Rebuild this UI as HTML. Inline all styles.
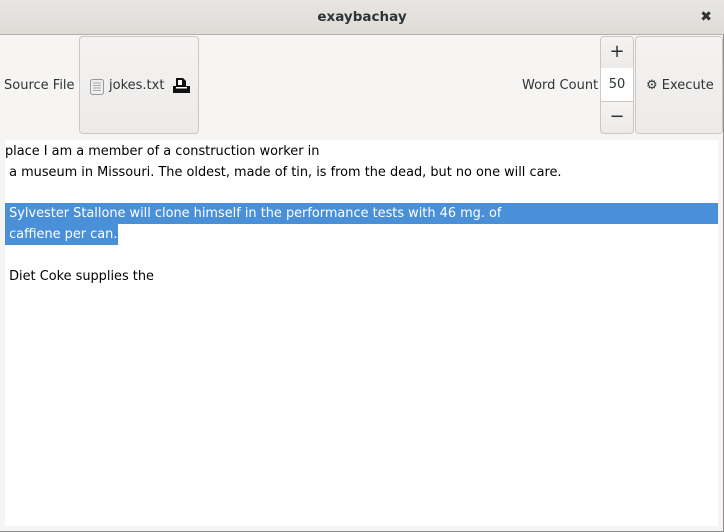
<!DOCTYPE html>
<html><head><style>
*{margin:0;padding:0;box-sizing:border-box}
body{width:724px;height:532px;overflow:hidden;background:#f6f5f4;font-family:"DejaVu Sans","Liberation Sans",sans-serif;font-size:13px;color:#2e3436;position:relative}
.title{position:absolute;left:0;top:0;width:724px;height:35px;background:linear-gradient(#e8e6e3,#dedbd7);border-bottom:1px solid #b6b0a8;text-align:center;line-height:34px;font-weight:bold;font-size:13.5px;color:#2e3436}
.close{position:absolute;right:12px;top:0;font-size:14px}
.btn{position:absolute;border:1px solid #cdc7c2;border-radius:4px;background:linear-gradient(#f4f3f2,#edebe9)}
.lbl{position:absolute;top:78px}
.text{position:absolute;left:5px;top:140px;width:713px;height:386px;background:#fff;color:#000;font-size:12.9px}
.ln{position:absolute;left:0;height:21px;line-height:22px;white-space:pre}
.sel{background:#4a90d9;color:#fff}
.edge{position:absolute;right:0;top:35px;width:1px;height:497px;background:#8a8a8a}
.bedge{position:absolute;left:0;bottom:0;width:724px;height:1px;background:#8a8a8a}
</style></head><body>
<div class="title">exaybachay<span class="close">✖</span></div>
<div class="lbl" style="left:4px">Source File</div>
<div class="btn" style="left:79px;top:36px;width:120px;height:98px">
 <svg style="position:absolute;left:10px;top:42px" width="15" height="16"><rect x="0.5" y="0.5" width="13" height="15" rx="2" fill="#eee" stroke="#999"/><path d="M3 4h8M3 6.5h8M3 9h8M3 11.5h8" stroke="#aaa"/></svg>
 <span style="position:absolute;left:29px;top:41px">jokes.txt</span>
 <svg style="position:absolute;left:93px;top:41px" width="17" height="15"><path d="M3 0h7l3 3v5H3z" fill="#111"/><rect x="5" y="2" width="4" height="5" fill="#fff"/><path d="M0 8h17v7H0z" fill="#111"/><rect x="3" y="9" width="11" height="1.5" fill="#fff"/></svg>
</div>
<div class="lbl" style="left:522px">Word Count</div>
<div class="btn" style="left:600px;top:36px;width:34px;height:33px;border-radius:4px 4px 0 0;text-align:center;line-height:30px;font-size:18px">+</div>
<div style="position:absolute;left:600px;top:68px;width:34px;height:34px;background:#fff;border-left:1px solid #cdc7c2;border-right:1px solid #cdc7c2;text-align:center;line-height:34px">50</div>
<div class="btn" style="left:600px;top:101px;width:34px;height:33px;border-radius:0 0 4px 4px;text-align:center;line-height:30px;font-size:18px">−</div>
<div class="btn" style="left:635px;top:36px;width:88px;height:98px"><span style="position:absolute;left:10px;top:41px">⚙ Execute</span></div>
<div class="text">
 <div class="ln" style="top:1px">place I am a member of a construction worker in</div>
 <div class="ln" style="top:22px"> a museum in Missouri. The oldest, made of tin, is from the dead, but no one will care.</div>
 <div class="ln sel" style="top:63px;width:713px"> Sylvester Stallone will clone himself in the performance tests with 46 mg. of</div>
 <div class="ln sel" style="top:84px;width:113px"> caffiene per can.</div>
 <div class="ln" style="top:126px"> Diet Coke supplies the</div>
</div>
<div class="edge"></div><div class="bedge"></div>
</body></html>
